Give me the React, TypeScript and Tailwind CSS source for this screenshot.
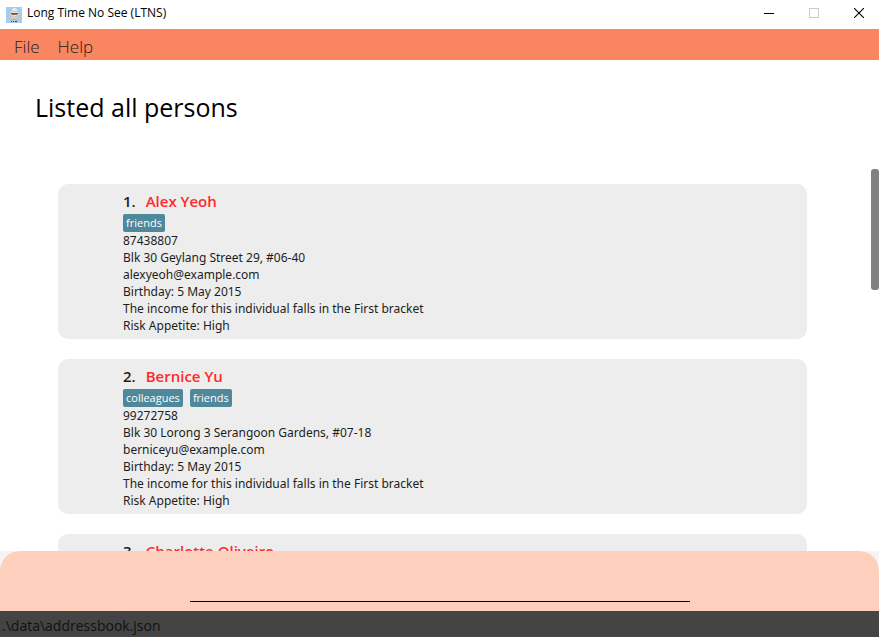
type Person = {
  name: string;
  tags: string[];
  phone: string;
  address: string;
  email: string;
  birthday: string;
  income: string;
  risk: string;
};

const persons: Person[] = [
  {
    name: "Alex Yeoh",
    tags: ["friends"],
    phone: "87438807",
    address: "Blk 30 Geylang Street 29, #06-40",
    email: "alexyeoh@example.com",
    birthday: "5 May 2015",
    income: "First",
    risk: "High",
  },
  {
    name: "Bernice Yu",
    tags: ["colleagues", "friends"],
    phone: "99272758",
    address: "Blk 30 Lorong 3 Serangoon Gardens, #07-18",
    email: "berniceyu@example.com",
    birthday: "5 May 2015",
    income: "First",
    risk: "High",
  },
  {
    name: "Charlotte Oliveiro",
    tags: [],
    phone: "",
    address: "",
    email: "",
    birthday: "",
    income: "",
    risk: "",
  },
];

function AppIcon() {
  return (
    <svg width="16" height="16" viewBox="0 0 16 16" aria-hidden="true" shapeRendering="crispEdges">
      <rect width="16" height="16" fill="#a6cdf0" />
      <path d="M7 1h3v1h1v2H6V2h1z" fill="#dbe9f6" />
      <path d="M5 4h7v1H5z" fill="#c3d3e0" />
      <path d="M5 5h7v1H5z" fill="#efe4d4" />
      <path d="M4 6h9v3h-1v1h-1v1H6v-1H5V9H4z" fill="#d9cbb8" />
      <path d="M5 6h7v1H5z" fill="#6b5442" />
      <path d="M6 7h5v1H6z" fill="#8a6d55" />
      <path d="M7 8h3v1H7z" fill="#efe4d4" />
      <path d="M4 11h9v1H4z" fill="#d8c6ae" />
      <path d="M6 12h5v1H6z" fill="#b3b0a8" />
      <path d="M5 14h1v1H5zM7 14h1v1H7zM9 14h2v1H9z" fill="#34465c" />
    </svg>
  );
}

function TitleBar() {
  return (
    <header className="flex h-[29px] shrink-0 items-center bg-white pl-1.5">
      <AppIcon />
      <h1 className="ml-[5px] flex-1 pb-1 text-[12px] leading-4 text-black">Long Time No See (LTNS)</h1>
      <div className="flex h-full items-center gap-[15px] pr-[5px] pb-1">
        <button type="button" aria-label="Minimize" className="flex w-[30px] justify-center">
          <svg width="10" height="10" shapeRendering="crispEdges">
            <path d="M0 5h10v1H0z" fill="#000" />
          </svg>
        </button>
        <button type="button" aria-label="Maximize" disabled className="flex w-[30px] justify-center">
          <svg width="10" height="10" shapeRendering="crispEdges">
            <rect x="0.5" y="0.5" width="9" height="9" fill="none" stroke="#ccc" />
          </svg>
        </button>
        <button type="button" aria-label="Close" className="flex w-[30px] justify-center">
          <svg width="10" height="10">
            <path d="M0 0l10 10M10 0L0 10" stroke="#000" strokeWidth="1.1" />
          </svg>
        </button>
      </div>
    </header>
  );
}

function PersonCard({ person, index }: { person: Person; index: number }) {
  return (
    <li className="h-[155px] shrink-0 rounded-[10px] bg-[#ededed] py-[5px] pl-[65px] font-['Noto_Sans',sans-serif] text-[12px] leading-[17px] text-[#1d1d1d]">
      <h3 className="flex h-[25px] gap-[10px] font-['Open_Sans',sans-serif] text-[15px] leading-[25px] font-semibold">
        <span>{index}.</span>
        <span className="text-[#ff2a2a]">{person.name}</span>
      </h3>
      <div className="flex h-[18px] gap-[7px] font-['Open_Sans',sans-serif]">
        {person.tags.map((tag) => (
          <span key={tag} className="rounded-[2px] bg-[#4f879b] px-[3px] text-[11px] leading-[18px] text-white">
            {tag}
          </span>
        ))}
      </div>
      {person.phone && (
        <>
          <p>{person.phone}</p>
          <p>{person.address}</p>
          <p>{person.email}</p>
          <p>Birthday: {person.birthday}</p>
          <p>The income for this individual falls in the {person.income} bracket</p>
          <p>Risk Appetite: {person.risk}</p>
        </>
      )}
    </li>
  );
}

export default function App() {
  return (
    <div className="flex h-screen flex-col overflow-hidden bg-white font-['Open_Sans',sans-serif]">
      <TitleBar />
      <nav className="flex h-[31px] shrink-0 items-center gap-[18px] bg-[#f98661] pt-1 pl-3.5 text-[17px] leading-6 font-light text-[#1d1d1d]">
        <button type="button">File</button>
        <button type="button">Help</button>
      </nav>
      <main className="flex min-h-0 flex-1 flex-col">
        <h2 className="h-[109px] shrink-0 pt-[29px] pl-[35px] text-[25px] leading-9 text-black">Listed all persons</h2>
        <div className="relative min-h-0 flex-1 overflow-hidden">
          <ul className="flex flex-col gap-5 pt-[15px] pr-[72px] pl-[58px]">
            {persons.map((person, i) => (
              <PersonCard key={person.name} person={person} index={i + 1} />
            ))}
          </ul>
          <div className="absolute top-0 right-0 h-[121px] w-2 rounded-[3px] bg-[#808080]" />
        </div>
      </main>
      <div className="shrink-0 bg-[#f4f4f4]">
        <div className="flex h-[60px] items-end justify-center rounded-t-[20px] bg-[#ffcfbe] pb-[9px]">
          <input
            type="text"
            aria-label="Command"
            className="h-9 w-[500px] border-b border-black bg-transparent text-[17px] outline-none"
          />
        </div>
      </div>
      <footer className="flex h-[26px] shrink-0 items-center bg-[#444] pt-1 pl-0.5 text-[14px] leading-5 text-[#111]">
        .\data\addressbook.json
      </footer>
    </div>
  );
}
